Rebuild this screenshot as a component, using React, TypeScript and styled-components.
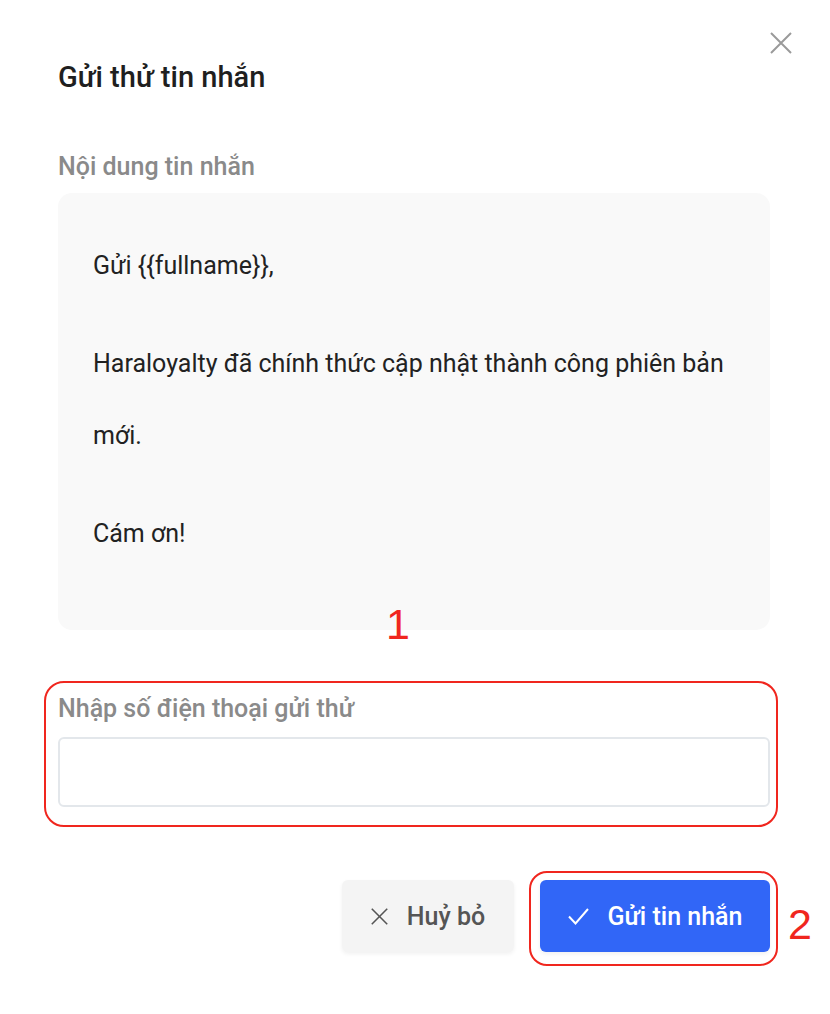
import React from 'react';
import styled, { createGlobalStyle } from 'styled-components';

const GlobalStyle = createGlobalStyle`
  html, body {
    margin: 0;
    padding: 0;
    background: #ffffff;
  }
  body {
    font-family: Roboto, 'Noto Sans', 'Liberation Sans', sans-serif;
  }
`;

const Modal = styled.div`
  position: relative;
  width: 830px;
  height: 1014px;
  box-sizing: border-box;
  padding: 59px 60px 0 58px;
  background: #fff;
  display: flex;
  flex-direction: column;
`;

const CloseButton = styled.button`
  position: absolute;
  top: 32px;
  right: 38px;
  width: 22px;
  height: 22px;
  padding: 0;
  border: none;
  background: none;
  cursor: pointer;
  display: flex;
`;

const Title = styled.h2`
  margin: 0;
  font-size: 29px;
  line-height: 36px;
  font-weight: 500;
  color: #1f1f1f;
`;

const Label = styled.div<{ $gap: number }>`
  font-size: 25px;
  line-height: 30px;
  font-weight: 500;
  color: #8a8a8a;
  margin-bottom: ${(p) => p.$gap}px;
`;

const Section = styled.div<{ $top: number }>`
  position: relative;
  margin-top: ${(p) => p.$top}px;
`;

const MessageBox = styled.div`
  background: #f9f9f9;
  border-radius: 14px;
  padding: 37px 35px 60px;
  font-size: 25px;
  line-height: 72px;
  color: #222;

  p {
    margin: 0 0 26px;
  }
  p:last-child {
    margin-bottom: 0;
  }
`;

const Marker = styled.span`
  position: absolute;
  font-family: 'Liberation Sans', Arial, sans-serif;
  font-size: 43px;
  line-height: 1;
  color: #f0261e;
`;

const MarkerOne = styled(Marker)`
  left: 328px;
  bottom: -16px;
`;

const Highlight = styled.div<{ $inset: string; $radius: number }>`
  position: absolute;
  inset: ${(p) => p.$inset};
  border: 2px solid #f0261e;
  border-radius: ${(p) => p.$radius}px;
  pointer-events: none;
`;

const PhoneInput = styled.input`
  display: block;
  width: 100%;
  height: 70px;
  box-sizing: border-box;
  border: 2px solid #e3e7eb;
  border-radius: 6px;
  padding: 0 16px;
  font-family: inherit;
  font-size: 22px;
  outline: none;
`;

const Footer = styled.div`
  margin-top: 73px;
  display: flex;
  justify-content: flex-end;
  gap: 26px;
`;

const ButtonWrap = styled.div`
  position: relative;
`;

const Button = styled.button<{ $primary?: boolean }>`
  height: 72px;
  width: ${(p) => (p.$primary ? 230 : 172)}px;
  border: none;
  border-radius: 6px;
  display: flex;
  align-items: center;
  justify-content: center;
  gap: 19px;
  font-family: inherit;
  font-size: 25px;
  font-weight: 500;
  cursor: pointer;
  background: ${(p) => (p.$primary ? '#3166f7' : '#f4f4f4')};
  color: ${(p) => (p.$primary ? '#ffffff' : '#555555')};
  box-shadow: 0 2px 4px rgba(0, 0, 0, 0.06);
`;

const MarkerTwo = styled(Marker)`
  left: 248px;
  top: 23px;
`;

function CloseIcon({ size, color, width }: { size: number; color: string; width: number }) {
  return (
    <svg width={size} height={size} viewBox="0 0 22 22" fill="none">
      <path d="M1 1 L21 21 M21 1 L1 21" stroke={color} strokeWidth={width} />
    </svg>
  );
}

function CheckIcon() {
  return (
    <svg width="21" height="17" viewBox="0 0 21 17" fill="none">
      <path d="M1 8.5 L7.5 15.5 L20 1" stroke="#fff" strokeWidth="2" />
    </svg>
  );
}

export default function App() {
  return (
    <>
      <GlobalStyle />
      <Modal>
        <CloseButton aria-label="Đóng">
          <CloseIcon size={22} color="#9a9a9a" width={2} />
        </CloseButton>
        <Title>Gửi thử tin nhắn</Title>

        <Section $top={57}>
          <Label $gap={11}>Nội dung tin nhắn</Label>
          <MessageBox>
            <p>Gửi {'{{fullname}}'},</p>
            <p>Haraloyalty đã chính thức cập nhật thành công phiên bản mới.</p>
            <p>Cám ơn!</p>
          </MessageBox>
          <MarkerOne>1</MarkerOne>
        </Section>

        <Section $top={64}>
          <Label $gap={13}>Nhập số điện thoại gửi thử</Label>
          <PhoneInput type="tel" />
          <Highlight $inset="-13px -8px -20px -14px" $radius={20} />
        </Section>

        <Footer>
          <Button>
            <CloseIcon size={17} color="#555" width={2} />
            Huỷ bỏ
          </Button>
          <ButtonWrap>
            <Button $primary>
              <CheckIcon />
              Gửi tin nhắn
            </Button>
            <Highlight $inset="-9px -8px -14px -11px" $radius={18} />
            <MarkerTwo>2</MarkerTwo>
          </ButtonWrap>
        </Footer>
      </Modal>
    </>
  );
}
